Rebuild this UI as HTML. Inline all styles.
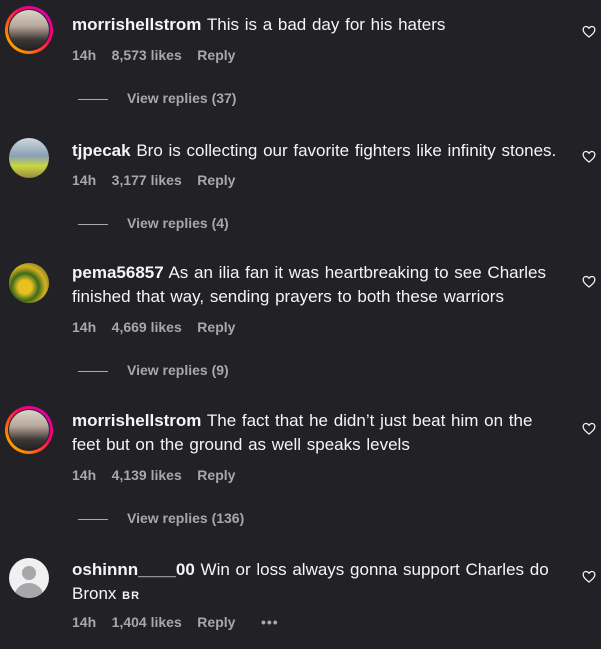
<!DOCTYPE html>
<html><head><meta charset="utf-8"><style>
body{margin:0;width:601px;height:649px;background:#212126;font-family:"Liberation Sans",sans-serif;overflow:hidden;position:relative;color:#f5f5f5}
.t{position:absolute;left:72px;font-size:17px;line-height:24px;white-space:nowrap;word-spacing:1px}
.t b{font-weight:700;word-spacing:0}
.m{position:absolute;left:72px;font-size:14px;color:#a8a8a8;font-weight:600;white-space:pre}
.v{position:absolute;left:78px;font-size:14px;color:#a8a8a8;font-weight:600}
.v:before{content:"";display:inline-block;width:30px;height:1px;background:#a8a8a8;vertical-align:middle;margin-right:19px}
.av{position:absolute;left:9px;width:40px;height:40px;border-radius:50%;overflow:hidden}
.h{position:absolute;left:582px;width:14px;height:13px}
</style></head><body>
<div style="position:absolute;left:5px;top:6px;width:48px;height:48px;border-radius:50%;background:linear-gradient(225deg,#d300c5,#ff0069 40%,#ff7a00 75%,#ffd600)"></div>
<div style="position:absolute;left:8px;top:9px;width:42px;height:42px;border-radius:50%;background:#212126"></div>
<div class="av" style="top:10px;background:linear-gradient(#d9d4c8 0%,#b9a89a 40%,#3a3633 75%,#222 100%)"></div>
<div class="t" style="top:13px"><b>morrishellstrom</b> This is a bad day for his haters</div>
<div class="m" style="top:47px">14h    8,573 likes    Reply</div>
<div class="v" style="top:90px">View replies (37)</div>

<div class="av" style="top:138px;background:linear-gradient(#cfd8e0 0%,#8aa0b5 45%,#c8d840 70%,#9a8a40 100%)"></div>
<div class="t" style="top:139px"><b>tjpecak</b> Bro is collecting our favorite fighters like infinity stones.</div>
<div class="m" style="top:172px">14h    3,177 likes    Reply</div>
<div class="v" style="top:215px">View replies (4)</div>

<div class="av" style="top:263px;background:radial-gradient(circle at 40% 60%,#e8c020 0 20%,#3d6a1c 40%,#d4b020 60%,#2f5518 100%)"></div>
<div class="t" style="top:261px"><b>pema56857</b> As an ilia fan it was heartbreaking to see Charles<br>finished that way, sending prayers to both these warriors</div>
<div class="m" style="top:319px">14h    4,669 likes    Reply</div>
<div class="v" style="top:362px">View replies (9)</div>

<div style="position:absolute;left:5px;top:406px;width:48px;height:48px;border-radius:50%;background:linear-gradient(225deg,#d300c5,#ff0069 40%,#ff7a00 75%,#ffd600)"></div>
<div style="position:absolute;left:8px;top:409px;width:42px;height:42px;border-radius:50%;background:#212126"></div>
<div class="av" style="top:410px;background:linear-gradient(#d9d4c8 0%,#b9a89a 40%,#3a3633 75%,#222 100%)"></div>
<div class="t" style="top:409px"><b>morrishellstrom</b> The fact that he didn’t just beat him on the<br>feet but on the ground as well speaks levels</div>
<div class="m" style="top:467px">14h    4,139 likes    Reply</div>
<div class="v" style="top:510px">View replies (136)</div>

<div class="av" style="top:558px;background:#f0f0f0"><div style="position:absolute;left:13px;top:8px;width:14px;height:14px;border-radius:50%;background:#a6a6ab"></div><div style="position:absolute;left:5px;top:25px;width:30px;height:30px;border-radius:50%;background:#a6a6ab"></div></div>
<div class="t" style="top:558px"><b>oshinnn____00</b> Win or loss always gonna support Charles do<br>Bronx <span style="font-size:11px;font-weight:700;letter-spacing:1px">BR</span></div>
<div class="m" style="top:614px">14h    1,404 likes    Reply</div>
<div style="position:absolute;left:261px;top:614px;font-size:14px;color:#a8a8a8;letter-spacing:1px;font-weight:700">•••</div>

<svg class="h" style="top:25px" viewBox="0 0 24 22"><path d="M12 20.5C5 15 2 12 2 7.5 2 4.5 4.3 2.5 7 2.5c2 0 3.5 1 5 3 1.5-2 3-3 5-3 2.7 0 5 2 5 5 0 4.5-3 7.5-10 13z" fill="none" stroke="#f5f5f5" stroke-width="2.2"/></svg>
<svg class="h" style="top:150px" viewBox="0 0 24 22"><path d="M12 20.5C5 15 2 12 2 7.5 2 4.5 4.3 2.5 7 2.5c2 0 3.5 1 5 3 1.5-2 3-3 5-3 2.7 0 5 2 5 5 0 4.5-3 7.5-10 13z" fill="none" stroke="#f5f5f5" stroke-width="2.2"/></svg>
<svg class="h" style="top:275px" viewBox="0 0 24 22"><path d="M12 20.5C5 15 2 12 2 7.5 2 4.5 4.3 2.5 7 2.5c2 0 3.5 1 5 3 1.5-2 3-3 5-3 2.7 0 5 2 5 5 0 4.5-3 7.5-10 13z" fill="none" stroke="#f5f5f5" stroke-width="2.2"/></svg>
<svg class="h" style="top:422px" viewBox="0 0 24 22"><path d="M12 20.5C5 15 2 12 2 7.5 2 4.5 4.3 2.5 7 2.5c2 0 3.5 1 5 3 1.5-2 3-3 5-3 2.7 0 5 2 5 5 0 4.5-3 7.5-10 13z" fill="none" stroke="#f5f5f5" stroke-width="2.2"/></svg>
<svg class="h" style="top:570px" viewBox="0 0 24 22"><path d="M12 20.5C5 15 2 12 2 7.5 2 4.5 4.3 2.5 7 2.5c2 0 3.5 1 5 3 1.5-2 3-3 5-3 2.7 0 5 2 5 5 0 4.5-3 7.5-10 13z" fill="none" stroke="#f5f5f5" stroke-width="2.2"/></svg>
</body></html>
